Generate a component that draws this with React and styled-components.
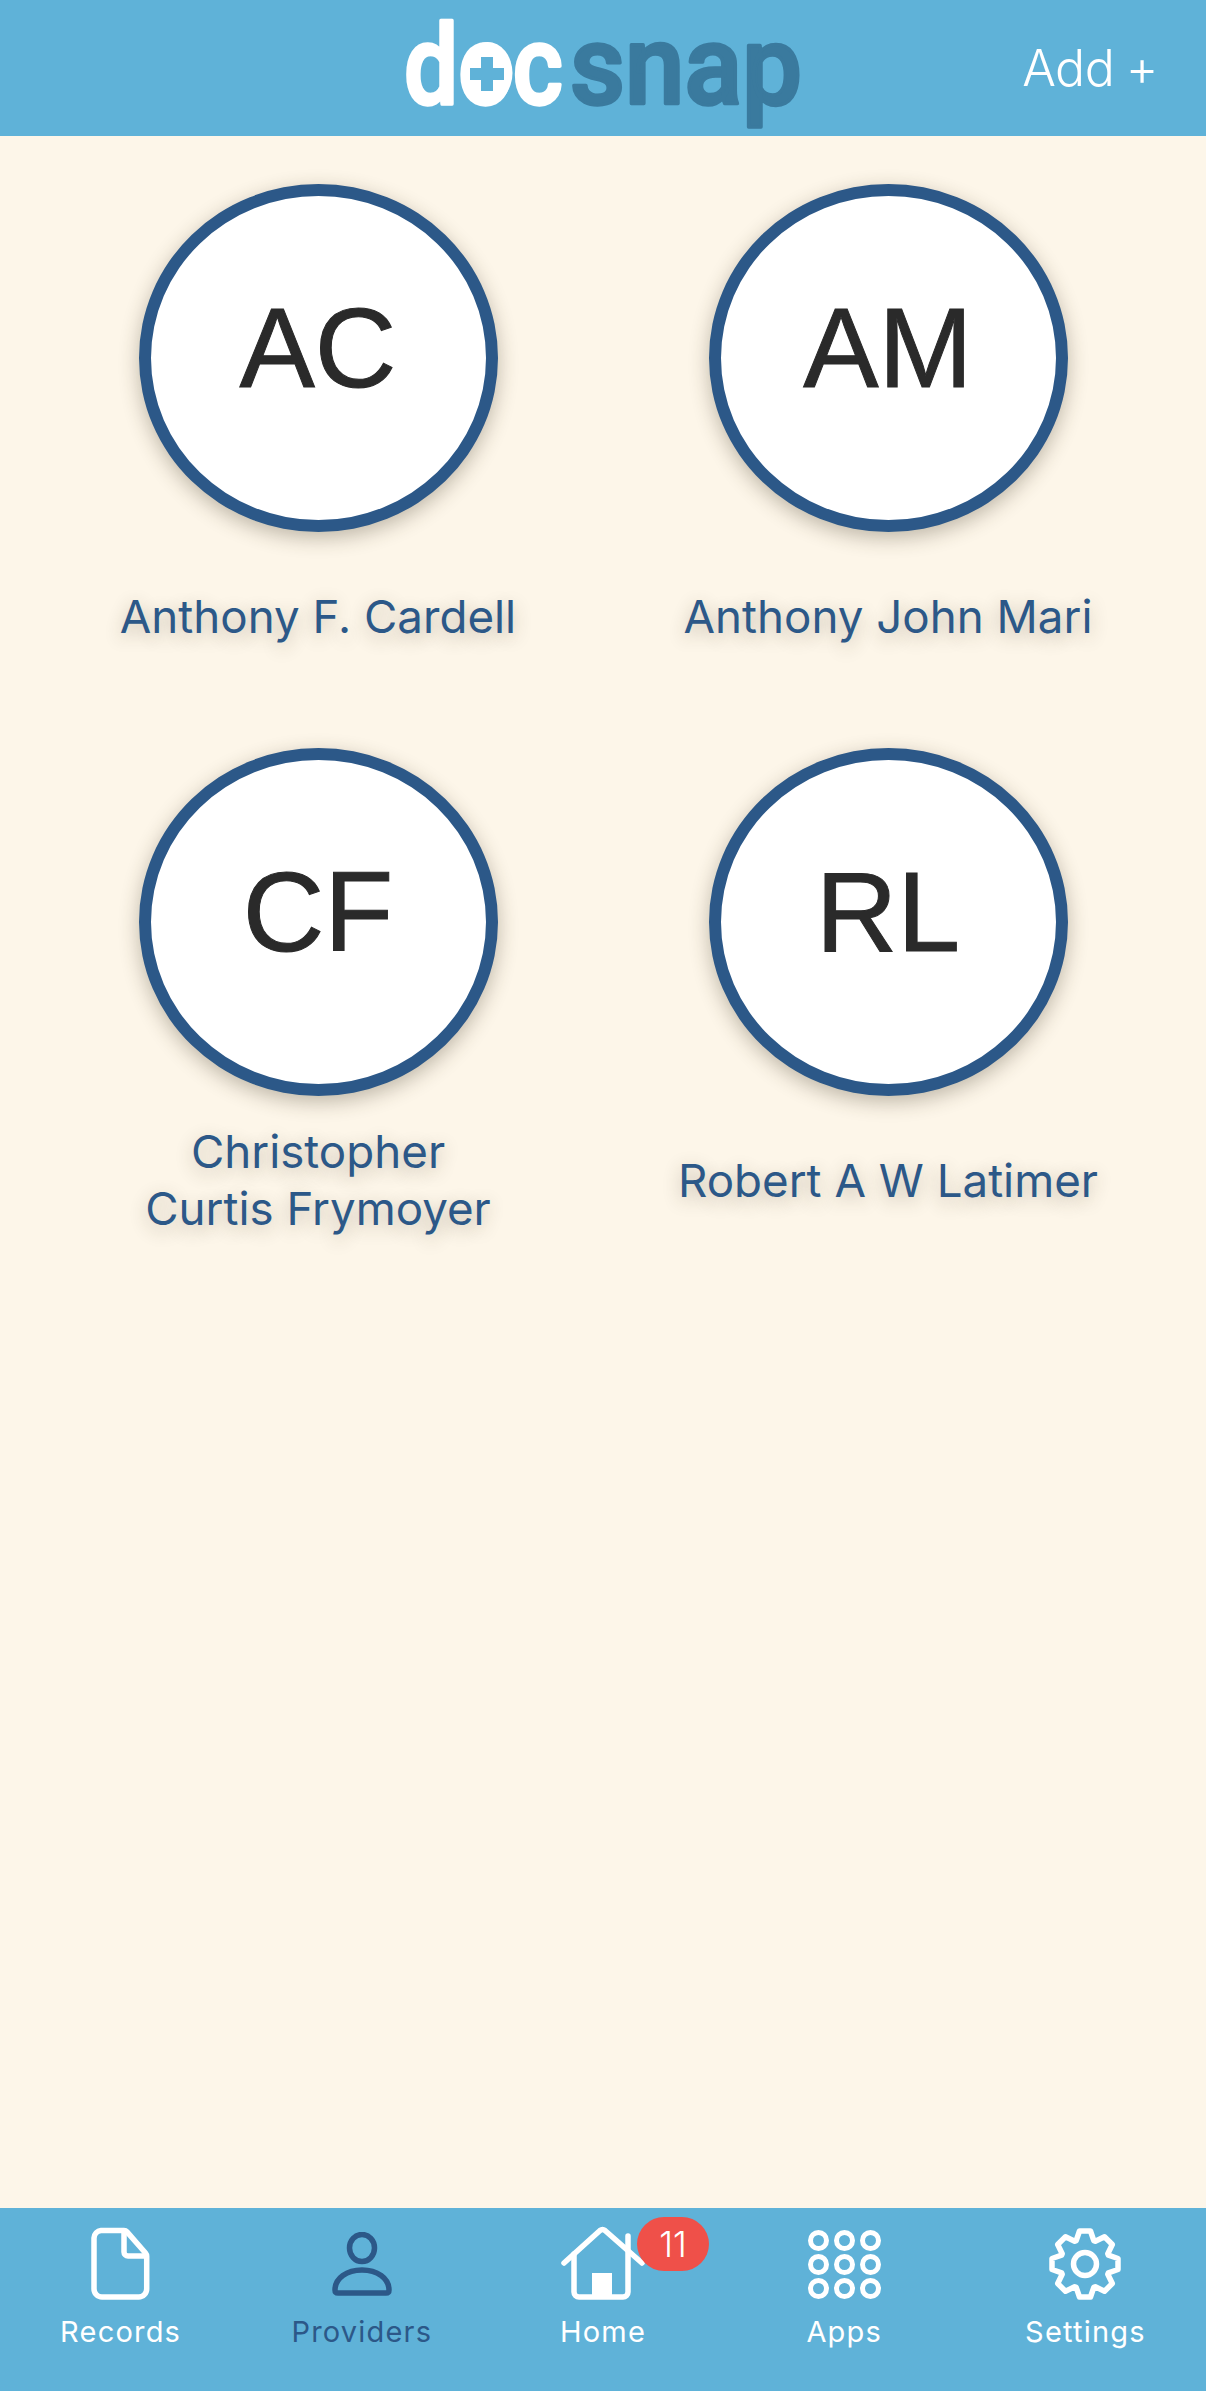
import styled, { createGlobalStyle } from 'styled-components';

const SKY = '#5fb2d8';
const NAVY = '#2c5888';
const CREAM = '#fdf6e9';

const GlobalStyle = createGlobalStyle`
  html, body {
    margin: 0;
    padding: 0;
    background: ${CREAM};
  }
  * {
    box-sizing: border-box;
  }
`;

const providers = [
  { initials: 'AC', name: 'Anthony F. Cardell' },
  { initials: 'AM', name: 'Anthony John Mari' },
  { initials: 'CF', name: 'Christopher Curtis Frymoyer' },
  { initials: 'RL', name: 'Robert A W Latimer' },
];

const gearPath = () => {
  const cx = 37;
  const cy = 37;
  const points = [];
  for (let i = 0; i < 8; i++) {
    const a = (i * Math.PI) / 4 - Math.PI / 2;
    const step = Math.PI / 8;
    [
      [-1.0, 25],
      [-0.42, 33.5],
      [0.42, 33.5],
      [1.0, 25],
    ].forEach(([k, r]) => {
      const t = a + k * step * (r > 30 ? 1 : 0.92);
      points.push(`${(cx + r * Math.cos(t)).toFixed(1)} ${(cy + r * Math.sin(t)).toFixed(1)}`);
    });
  }
  return `M${points.join('L')}Z`;
};

const RecordsIcon = () => (
  <svg width="60" height="74" viewBox="0 0 60 74" fill="none" stroke="#fff" strokeWidth="5.5" strokeLinejoin="round" strokeLinecap="round">
    <path d="M10 3.5h23a4 4 0 0 1 3 1.4L54.500 26a5 5 0 0 1 1.200 3.300V62a8 8 0 0 1-8 8H11a8 8 0 0 1-8-8V11a8 8 0 0 1 7-7.500Z" />
    <path d="M33 4v21a4 4 0 0 0 4 4h18" />
  </svg>
);

const ProvidersIcon = () => (
  <svg width="60" height="64" viewBox="0 0 60 64" fill="none" stroke={NAVY} strokeWidth="5.500" strokeLinejoin="round">
    <ellipse cx="30" cy="16" rx="12.500" ry="13.500" />
    <path d="M3 58c0-12 12-20 27-20s27 8 27 20c0 2-1 3-3 3H6c-2 0-3-1-3-3Z" />
  </svg>
);

const HomeIcon = () => (
  <svg width="84" height="76" viewBox="0 0 84 76" fill="none" stroke="#fff" strokeWidth="5.500" strokeLinecap="round" strokeLinejoin="round">
    <path d="M3 37 39 4.500a4 4 0 0 1 5 0L81 37" />
    <path d="M13 28v38a5 5 0 0 0 5 5h44a5 5 0 0 0 5-5V10" />
    <path d="M31 71V47h20v24Z" fill="#fff" stroke="none" />
  </svg>
);

const AppsIcon = () => (
  <svg width="73" height="69" viewBox="0 0 73 69" fill="none" stroke="#fff" strokeWidth="5">
    {[10.5, 34.5, 58.5].map((y) =>
      [10.5, 36.5, 62.5].map((x) => <circle key={`${x}-${y}`} cx={x} cy={y} r="8" />),
    )}
  </svg>
);

const SettingsIcon = () => (
  <svg width="74" height="74" viewBox="0 0 74 74" fill="none" stroke="#fff" strokeWidth="5.500" strokeLinejoin="round">
    <path d={gearPath()} />
    <circle cx="37" cy="37" r="11.500" />
  </svg>
);

const tabs = [
  { label: 'Records', icon: <RecordsIcon /> },
  { label: 'Providers', icon: <ProvidersIcon />, active: true },
  { label: 'Home', icon: <HomeIcon />, badge: 11 },
  { label: 'Apps', icon: <AppsIcon /> },
  { label: 'Settings', icon: <SettingsIcon /> },
];

const App = () => (
  <Page>
    <GlobalStyle />
    <Header>
      <span />
      <Logo viewBox="0 0 402 136" role="img" aria-label="docsnap">
        <LogoWord x="2" y="104" textLength="159" lengthAdjust="spacingAndGlyphs" $colour="#ffffff">doc</LogoWord>
        <LogoWord x="168" y="104" textLength="232" lengthAdjust="spacingAndGlyphs" $colour="#3a7a9e">snap</LogoWord>
        <ellipse cx="85.500" cy="73" rx="25" ry="31" fill="#fff" />
        <path
          d="M79 57h12v11h11v12H91v11H79V80H68V68h11Z"
          fill={SKY}
        />
      </Logo>
      <AddButton>Add +</AddButton>
    </Header>
    <Content>
      {providers.map((p) => (
        <Card key={p.initials}>
          <Avatar>{p.initials}</Avatar>
          <Name>{p.name}</Name>
        </Card>
      ))}
    </Content>
    <TabBar>
      {tabs.map((t) => (
        <Tab key={t.label} $active={t.active}>
          <IconSlot>
            {t.icon}
            {t.badge && <Badge>{t.badge}</Badge>}
          </IconSlot>
          {t.label}
        </Tab>
      ))}
    </TabBar>
  </Page>
);

const Page = styled.div`
  min-height: 100vh;
  display: flex;
  flex-direction: column;
  background: ${CREAM};
`;

const Header = styled.header`
  height: 136px;
  display: grid;
  grid-template-columns: 1fr 402px 1fr;
  align-items: center;
  background: ${SKY};
`;

const Logo = styled.svg`
  width: 402px;
  height: 136px;
  display: block;
`;

const LogoWord = styled.text`
  font-family: 'Roboto', sans-serif;
  font-weight: 500;
  font-size: 112px;
  fill: ${(p) => p.$colour};
  stroke: ${(p) => p.$colour};
  stroke-width: 3.5px;
  stroke-linejoin: round;
`;

const AddButton = styled.div`
  justify-self: end;
  padding-right: 48px;
  color: #fff;
  font-family: 'Inter', sans-serif;
  font-weight: 300;
  font-size: 50px;
  letter-spacing: -0.5px;
  word-spacing: -2px;
  line-height: 1;
`;

const Content = styled.main`
  flex: 1;
  display: grid;
  grid-template-columns: 570px 570px;
  justify-content: center;
  align-content: start;
  row-gap: 75px;
  padding-top: 48px;
`;

const Card = styled.div`
  display: flex;
  flex-direction: column;
  align-items: center;
`;

const Avatar = styled.div`
  width: 359px;
  height: 348px;
  padding-bottom: 20px;
  display: flex;
  align-items: center;
  justify-content: center;
  border: 12px solid ${NAVY};
  border-radius: 50%;
  background: #fff;
  box-shadow: 0 6px 20px rgba(60, 50, 30, 0.32);
  color: #2a2a2a;
  font-family: 'Liberation Sans', Arial, sans-serif;
  font-size: 113px;
  -webkit-text-stroke: 1px #2a2a2a;
`;

const Name = styled.div`
  height: 114px;
  margin-top: 27px;
  padding: 0 40px;
  display: flex;
  align-items: center;
  text-align: center;
  text-wrap: balance;
  color: ${NAVY};
  font-family: 'Inter', sans-serif;
  font-size: 45.7px;
  line-height: 57px;
  text-shadow: 0 5px 18px rgba(60, 50, 30, 0.3);
`;

const TabBar = styled.nav`
  height: 183px;
  display: flex;
  background: ${SKY};
`;

const Tab = styled.div`
  flex: 1;
  display: flex;
  flex-direction: column;
  align-items: center;
  padding-top: 18px;
  color: ${(p) => (p.$active ? NAVY : '#fff')};
  font-family: 'Inter', sans-serif;
  font-size: 29px;
  letter-spacing: 1.2px;
  line-height: 40px;
`;

const IconSlot = styled.div`
  position: relative;
  height: 76px;
  margin-bottom: 10px;
  display: flex;
  align-items: center;
  justify-content: center;
`;

const Badge = styled.span`
  position: absolute;
  top: -9px;
  left: 76px;
  width: 72px;
  height: 54px;
  border-radius: 27px;
  display: flex;
  align-items: center;
  justify-content: center;
  background: #ef5049;
  color: #fff;
  font-family: 'Inter', sans-serif;
  font-weight: 300;
  font-size: 35px;
  letter-spacing: 0;
`;

export default App;
